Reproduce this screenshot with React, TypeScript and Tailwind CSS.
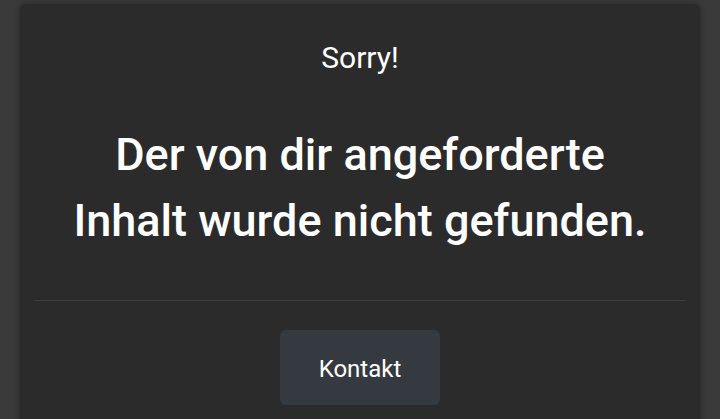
import React from 'react';

export default function App() {
  return (
    <div className="h-screen overflow-hidden bg-[#3a3a3a] px-[20px] pt-[4px]" style={{ fontFamily: 'Roboto, "Noto Sans", sans-serif' }}>
      <div className="min-h-[500px] rounded-[6px] bg-[#2b2b2b] px-[15px] shadow-[0_0_6px_rgba(0,0,0,0.35)]">
        <div className="pt-[36px] text-center text-[30px] leading-[36px] text-white">Sorry!</div>
        <h1 className="mt-[46px] text-center text-[45px] font-medium leading-[66px] text-white">
          Der von dir angeforderte
          <br />
          Inhalt wurde nicht gefunden.
        </h1>
        <div className="mt-[46px] border-t border-[#3e3e3e]" />
        <div className="flex justify-center pt-[29px]">
          <button className="flex h-[75px] w-[160px] items-center justify-center rounded-[6px] bg-[#343a40] pt-[2px] text-[24px] leading-[36px] text-white">
            Kontakt
          </button>
        </div>
      </div>
    </div>
  );
}
